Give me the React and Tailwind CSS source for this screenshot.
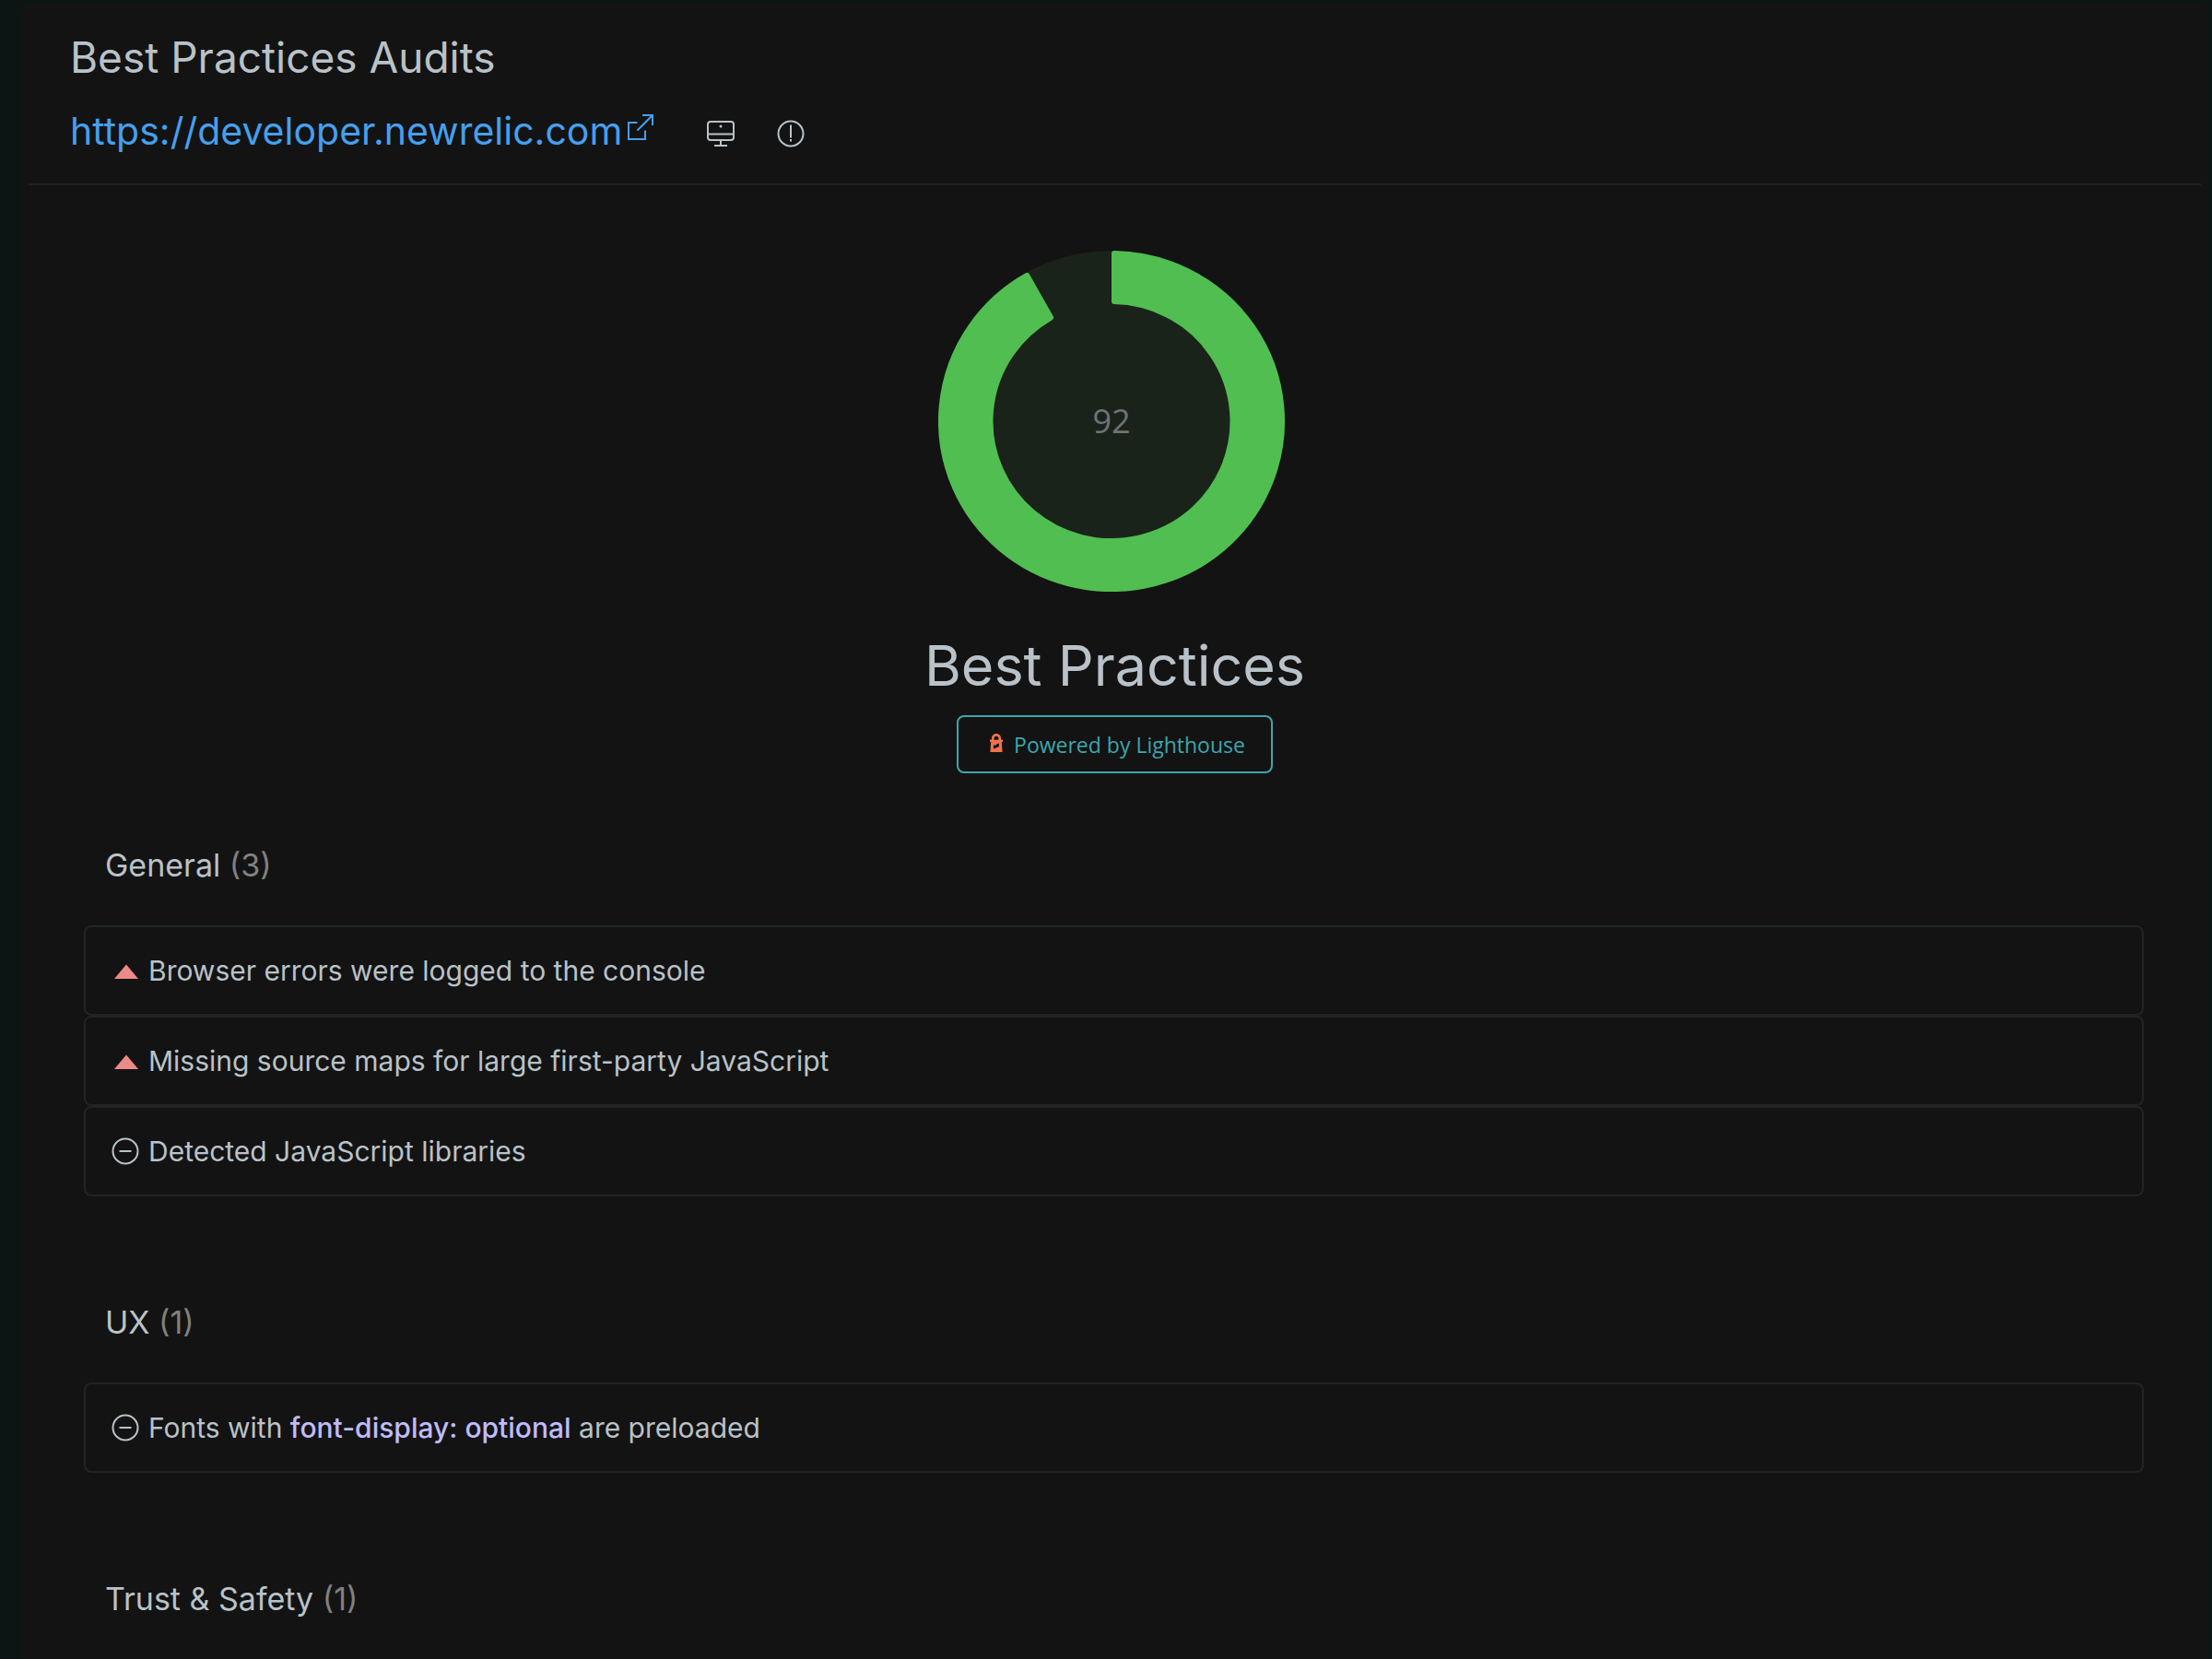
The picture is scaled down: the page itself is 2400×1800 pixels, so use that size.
import React from "react";

const SCORE = 92;

const sections = [
  {
    title: "General",
    audits: [
      { status: "fail", text: "Browser errors were logged to the console" },
      { status: "fail", text: "Missing source maps for large first-party JavaScript" },
      { status: "info", text: "Detected JavaScript libraries" },
    ],
  },
  {
    title: "UX",
    audits: [
      {
        status: "info",
        text: (
          <>
            Fonts with <span className="font-medium text-[#bfbbfb]">font-display: optional</span> are preloaded
          </>
        ),
      },
    ],
  },
];

function ExternalIcon() {
  return (
    <svg className="mt-2 h-7 w-7 self-start" viewBox="0 0 28 28" fill="none" stroke="currentColor" strokeWidth="2" aria-hidden="true">
      <path d="M10.500 9H1v18h18v-9.500" />
      <path d="M16 1h11v11M27 1L10.500 17.500" />
    </svg>
  );
}

function MonitorIcon() {
  return (
    <svg className="h-[30px] w-[30px]" viewBox="0 0 30 30" fill="none" stroke="currentColor" strokeWidth="2" aria-hidden="true">
      <rect x="1" y="2" width="28" height="20" rx="3" />
      <path d="M1 15.500h28M15 22v6M8 28h14" />
      <circle cx="15" cy="7" r="1.500" fill="currentColor" stroke="none" />
    </svg>
  );
}

function AlertIcon() {
  return (
    <svg className="h-[30px] w-[30px]" viewBox="0 0 30 30" fill="none" stroke="currentColor" strokeWidth="2" aria-hidden="true">
      <circle cx="15" cy="15" r="13.500" />
      <path d="M15 5.500v14M15 21v2.500" />
    </svg>
  );
}

function StatusIcon({ status }) {
  if (status === "fail") {
    return (
      <svg className="h-[30px] w-[30px] shrink-0" viewBox="0 0 30 30" role="img" aria-label="Failed">
        <path d="M16 8.500L29 24H3z" fill="#ec8a88" />
      </svg>
    );
  }
  return (
    <svg className="h-[30px] w-[30px] shrink-0" viewBox="0 0 30 30" fill="none" stroke="currentColor" strokeWidth="2" role="img" aria-label="Informative">
      <circle cx="15" cy="15" r="13.500" />
      <path d="M8.500 15h13" />
    </svg>
  );
}

function LighthouseIcon() {
  return (
    <svg className="mb-[6px] h-5 w-[14px]" viewBox="0 0 14 20" aria-hidden="true">
      <path
        fill="#f0714d"
        fillRule="evenodd"
        d="M7 0C9.800 0 11.500 1.800 12 4v2.500h2V9h-1.200l.8 11H.4l.8-11H0V6.500h2V4C2.500 1.800 4.200 0 7 0zM7 2.800C5.500 2.800 4.600 4 4.600 5.200v1.600h4.800V5.200C9.400 4 8.500 2.800 7 2.800zM4 12.500v4l6-2.500v-3.500l-3 1v1z"
      />
    </svg>
  );
}

function ScoreDonut({ score }) {
  const cx = 188;
  const cy = 185;
  const r = 3;
  const outer = { x: 188 - r, y: 185 - r };
  const inner = { x: 128.5 + r, y: 127 + r };
  const end = (score / 100) * 2 * Math.PI;
  const pad = (radius) => r / radius;
  const at = (e, a) => `${cx + e.x * Math.sin(a)} ${cy - e.y * Math.cos(a)}`;
  const d = [
    `M${at(outer, pad(outer.x))}`,
    `A${outer.x} ${outer.y} 0 1 1 ${at(outer, end - pad(outer.x))}`,
    `L${at(inner, end - pad(inner.x))}`,
    `A${inner.x} ${inner.y} 0 1 0 ${at(inner, pad(inner.x))}`,
    "Z",
  ].join(" ");
  return (
    <svg className="h-[370px] w-[384px]" viewBox="0 0 384 370" role="img" aria-label={`Score ${score}`}>
      <ellipse cx={cx} cy={cy} rx="188" ry="185" fill="#1a231a" />
      <path d={d} fill="#50be50" stroke="#50be50" strokeWidth={2 * r} strokeLinejoin="round" />
      <text x={cx} y="198" textAnchor="middle" fill="#6e7374" className="font-['Open_Sans',sans-serif] text-[36px]">
        {score}
      </text>
    </svg>
  );
}

function SectionTitle({ title, count }) {
  return (
    <h3 className="px-[23px] text-[34px] leading-10">
      {title} <span className="text-[#808080]">({count})</span>
    </h3>
  );
}

export default function App() {
  return (
    <div className="flex min-h-screen bg-[#0c1414] pt-[3px] pr-[5px] pl-6 font-[Inter,sans-serif] text-[#b9c2c8]">
      <main className="flex-1 rounded-t-lg bg-[#131313]">
        <header className="mx-[7px] border-b-2 border-[#222222] px-[45px] pt-[31px] pb-[31px]">
          <h1 className="text-[46px] leading-[56px]">Best Practices Audits</h1>
          <div className="mt-[26px] flex h-[52px] items-end">
            <a href="https://developer.newrelic.com" className="flex items-center gap-[6px] text-[#469fee]">
              <span className="text-[41px] leading-[52px]">https://developer.newrelic.com</span>
              <ExternalIcon />
            </a>
            <button type="button" aria-label="Desktop" className="mb-2 ml-[58px]">
              <MonitorIcon />
            </button>
            <button type="button" aria-label="Information" className="mb-2 ml-[46px]">
              <AlertIcon />
            </button>
          </div>
        </header>

        <section className="flex flex-col items-center pt-[71px]">
          <ScoreDonut score={SCORE} />
          <h2 className="mt-10 text-[61px] leading-20">Best Practices</h2>
          <button
            type="button"
            className="mt-[14px] flex h-[63px] items-center gap-3 rounded-lg border-2 border-[#3fa5ac] pt-[2px] pr-7 pl-[34px] font-['Open_Sans',sans-serif] text-[23px] text-[#3fa5ac]"
          >
            <LighthouseIcon />
            Powered by Lighthouse
          </button>
        </section>

        <div className="pr-[69px] pl-[67px] pt-20">
          {sections.map((s) => (
            <section key={s.title} className="mb-[117px]">
              <SectionTitle title={s.title} count={s.audits.length} />
              <ul className="mt-[45px]">
                {s.audits.map((a, i) => (
                  <li key={i} className="flex h-[98px] items-center gap-[10px] rounded-lg border-2 border-[#222424] px-7 text-[30px]">
                    <StatusIcon status={a.status} />
                    <span>{a.text}</span>
                  </li>
                ))}
              </ul>
            </section>
          ))}
          <SectionTitle title="Trust & Safety" count={1} />
        </div>
      </main>
    </div>
  );
}
